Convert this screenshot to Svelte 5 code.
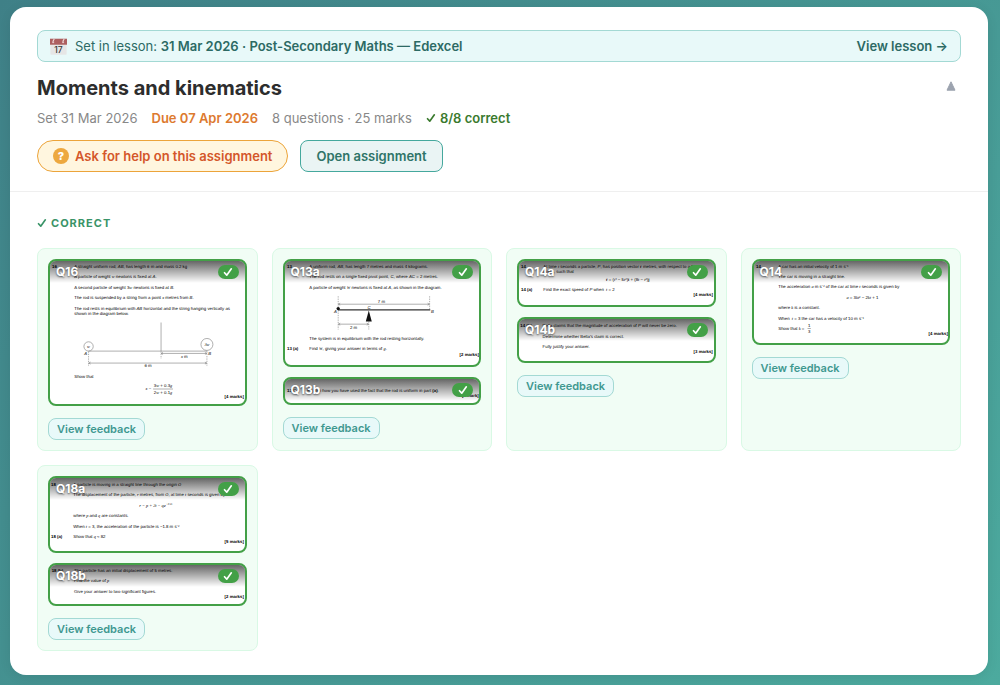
<script lang="ts">
	let open = $state(true);

	const lesson = { date: "31 Mar 2026", group: "Post-Secondary Maths — Edexcel" };
	const assignment = {
		title: "Moments and kinematics",
		set: "31 Mar 2026",
		due: "07 Apr 2026",
		questions: 8,
		marks: 25,
		correct: 8
	};
</script>

<svelte:head>
	<title>{assignment.title}</title>
</svelte:head>

{#snippet tick(cls)}
	<svg class={cls} viewBox="0 0 12 12" aria-hidden="true">
		<path d="M1.8 6.9 4.5 9.8 10 2.2" fill="none" stroke="currentColor" stroke-linecap="round" stroke-linejoin="round" />
	</svg>
{/snippet}

{#snippet thumb(label, height, scan)}
	<div class="thumb">
		<svg class="scan" viewBox="0 0 585 {height}">
			{@render scan()}
		</svg>
		<div class="overlay">
			<span class="label">{label}</span>
			<span class="badge">{@render tick("badge-tick")}</span>
		</div>
	</div>
{/snippet}

{#snippet q16()}
	<text class="b" x="6" y="21">16</text>
	<text x="73" y="21">A straight uniform rod, <tspan class="i">AB</tspan>, has length 6 m and mass 0.2 kg</text>
	<text x="73" y="52">A particle of weight <tspan class="m">w</tspan> newtons is fixed at <tspan class="i">A</tspan>.</text>
	<text x="73" y="84">A second particle of weight 3<tspan class="m">w</tspan> newtons is fixed at <tspan class="i">B</tspan>.</text>
	<text x="73" y="115">The rod is suspended by a string from a point <tspan class="m">x</tspan> metres from <tspan class="i">B</tspan>.</text>
	<text x="73" y="146">The rod rests in equilibrium with <tspan class="i">AB</tspan> horizontal and the string hanging vertically as</text>
	<text x="73" y="161">shown in the diagram below.</text>
	<path class="line" d="M334 185V271M116 271H473" />
	<circle class="line" cx="116" cy="257" r="14" />
	<circle class="line" cx="472" cy="251" r="18" />
	<text class="m" x="116" y="261" text-anchor="middle">w</text>
	<text class="m" x="472" y="255" text-anchor="middle">3w</text>
	<text class="i" x="103" y="284">A</text>
	<text class="i" x="476" y="284">B</text>
	<path class="line dash" d="M116 272V316M334 272V294M472 272V316" />
	<path class="line" d="M334 278H472M340 275 335 278 340 281M466 275 471 278 466 281M116 307H472M122 304 117 307 122 310M466 304 471 307 466 310" />
	<text x="404" y="291" text-anchor="middle"><tspan class="m">x</tspan> m</text>
	<text x="295" y="320" text-anchor="middle">6 m</text>
	<text x="73" y="351">Show that</text>
	<text class="m" x="287" y="389">x =</text>
	<text x="340" y="380" text-anchor="middle">3<tspan class="m">w</tspan> + 0.3<tspan class="m">g</tspan></text>
	<path class="line" d="M310 385H370" />
	<text x="340" y="399" text-anchor="middle">2<tspan class="m">w</tspan> + 0.1<tspan class="m">g</tspan></text>
	<text class="b" x="583" y="413" text-anchor="end">[4 marks]</text>
{/snippet}

{#snippet q13a()}
	<text class="b" x="6" y="21">13</text>
	<text x="73" y="21">A uniform rod, <tspan class="i">AB</tspan>, has length 7 metres and mass 4 kilograms.</text>
	<text x="73" y="52">The rod rests on a single fixed pivot point, <tspan class="i">C</tspan>, where <tspan class="i">AC</tspan> = 2 metres.</text>
	<text x="73" y="84">A particle of weight <tspan class="m">W</tspan> newtons is fixed at <tspan class="i">A</tspan>, as shown in the diagram.</text>
	<path class="line dash" d="M160 106V206M435 106V144M252 182V206" />
	<path class="line" d="M160 130H435M166 127 161 130 166 133M429 127 434 130 429 133M160 190H252M166 187 161 190 166 193M246 187 251 190 246 193" />
	<path d="M160 147H437" stroke="#333" stroke-width="4" />
	<circle cx="160" cy="143" r="5" fill="#111" />
	<path d="M252 149 261 182H243Z" fill="#111" />
	<text x="290" y="125" text-anchor="middle">7 m</text>
	<text class="i" x="248" y="143">C</text>
	<text class="i" x="147" y="155">A</text>
	<text class="i" x="439" y="155">B</text>
	<text x="206" y="206" text-anchor="middle">2 m</text>
	<text x="73" y="238">The system is in equilibrium with the rod resting horizontally.</text>
	<text class="b" x="6" y="269">13 (a)</text>
	<text x="73" y="269">Find <tspan class="m">W</tspan>, giving your answer in terms of <tspan class="m">g</tspan>.</text>
	<text class="b" x="583" y="285" text-anchor="end">[2 marks]</text>
{/snippet}

{#snippet q13b()}
	<text class="b" x="6" y="39">13 (b)</text>
	<text x="66" y="39">Explain how you have used the fact that the rod is uniform in part <tspan class="b">(a)</tspan>.</text>
	<text class="b" x="583" y="55" text-anchor="end">[1 mark]</text>
{/snippet}

{#snippet q14a()}
	<text class="b" x="6" y="21">14</text>
	<text x="73" y="21">At time <tspan class="m">t</tspan> seconds a particle, <tspan class="i">P</tspan>, has position vector <tspan class="b">r</tspan> metres, with respect to a fixed</text>
	<text x="73" y="36">origin, such that</text>
	<text x="327" y="59" text-anchor="middle"><tspan class="b">r</tspan> = (<tspan class="m">t</tspan>³ − 5<tspan class="m">t</tspan>²)<tspan class="b">i</tspan> + (8<tspan class="m">t</tspan> − <tspan class="m">t</tspan>²)<tspan class="b">j</tspan></text>
	<text class="b" x="6" y="90">14 (a)</text>
	<text x="73" y="90">Find the exact speed of <tspan class="i">P</tspan> when <tspan class="m" dx="3">t</tspan> = 2</text>
	<text class="b" x="583" y="105" text-anchor="end">[4 marks]</text>
{/snippet}

{#snippet q14b()}
	<text class="b" x="4" y="25">14 (b)</text>
	<text x="71" y="25">Bella claims that the magnitude of acceleration of <tspan class="i">P</tspan> will never be zero.</text>
	<text x="71" y="56">Determine whether Bella's claim is correct.</text>
	<text x="71" y="88">Fully justify your answer.</text>
	<text class="b" x="583" y="103" text-anchor="end">[3 marks]</text>
{/snippet}

{#snippet q14()}
	<text class="b" x="6" y="20">14</text>
	<text x="73" y="20">A car has an initial velocity of 1 m s⁻¹</text>
	<text x="73" y="51">The car is moving in a straight line.</text>
	<text x="73" y="82">The acceleration <tspan class="m">a</tspan> m s⁻² of the car at time <tspan class="m">t</tspan> seconds is given by</text>
	<text x="326" y="114" text-anchor="middle"><tspan class="m">a</tspan> = 3<tspan class="m">kt</tspan>² − 2<tspan class="m">kt</tspan> + 1</text>
	<text x="73" y="145">where <tspan class="m">k</tspan> is a constant.</text>
	<text x="73" y="176">When <tspan class="m" dx="3">t</tspan> = 3 the car has a velocity of 10 m s⁻¹</text>
	<text x="73" y="207">Show that <tspan class="m">k</tspan> =</text>
	<text x="166" y="199" text-anchor="middle">1</text>
	<path class="line" d="M161 203H171" />
	<text x="166" y="216" text-anchor="middle">3</text>
	<text class="b" x="583" y="223" text-anchor="end">[4 marks]</text>
{/snippet}

{#snippet q18a()}
	<text class="b" x="3" y="24">18</text>
	<text x="70" y="24">A particle is moving in a straight line through the origin <tspan class="m">O</tspan></text>
	<text x="70" y="55">The displacement of the particle, <tspan class="m">r</tspan> metres, from <tspan class="m">O</tspan>, at time <tspan class="m">t</tspan> seconds is given by</text>
	<text class="m" x="318" y="87" text-anchor="middle">r = p + 2t − qe<tspan class="sup" dy="-5">−0.2t</tspan></text>
	<text x="70" y="118">where <tspan class="m">p</tspan> and <tspan class="m">q</tspan> are constants.</text>
	<text x="70" y="150">When <tspan class="m">t</tspan> = 3, the acceleration of the particle is −1.8 m s⁻²</text>
	<text class="b" x="3" y="181">18 (a)</text>
	<text x="70" y="181">Show that <tspan class="m">q</tspan> ≈ 82</text>
	<text class="b" x="583" y="197" text-anchor="end">[5 marks]</text>
{/snippet}

{#snippet q18b()}
	<text class="b" x="5" y="21">18 (b)</text>
	<text x="72" y="21">The particle has an initial displacement of 5 metres.</text>
	<text x="72" y="52">Find the value of <tspan class="m">p</tspan></text>
	<text x="72" y="83">Give your answer to two significant figures.</text>
	<text class="b" x="583" y="99" text-anchor="end">[2 marks]</text>
{/snippet}

<main>
	<article>
		<header>
			<div class="lesson">
				<svg class="calendar" viewBox="0 0 48 48" aria-hidden="true">
					<rect x="1" y="3" width="46" height="44" rx="2" fill="#e6e6e6" />
					<path d="M0 2H48V19H0Z" fill="#ad5f60" />
					<path d="M8 10 12 3M36 10 40 3" stroke="#f0dede" stroke-width="3" />
					<circle cx="9" cy="12" r="3" fill="#e3c5c5" />
					<circle cx="37" cy="12" r="3" fill="#e3c5c5" />
					<text x="24" y="42" text-anchor="middle">17</text>
				</svg>
				<span>Set in lesson: <b>{lesson.date} · {lesson.group}</b></span>
				<a href="#lesson">View lesson →</a>
			</div>
			<div class="title">
				<h1>{assignment.title}</h1>
				<button class="toggle" aria-label="Toggle assignment" aria-expanded={open} onclick={() => (open = !open)}>
					<svg viewBox="0 0 10 10" class:closed={!open}>
						<path d="M5 .8 9 9.2H1Z" fill="#9ca3af" stroke="#9ca3af" stroke-linejoin="round" />
					</svg>
				</button>
			</div>
			<div class="meta">
				<span>Set {assignment.set}</span>
				<span class="due">Due {assignment.due}</span>
				<span>{assignment.questions} questions · {assignment.marks} marks</span>
				<span class="score">{@render tick("tick")}{assignment.correct}/{assignment.questions} correct</span>
			</div>
			<div class="actions">
				<button class="help"><span class="q">?</span>Ask for help on this assignment</button>
				<button class="open">Open assignment</button>
			</div>
		</header>

		{#if open}
			<section>
				<h2>{@render tick("tick")}Correct</h2>
				<div class="grid">
					<div class="card">
						{@render thumb("Q16", 431, q16)}
						<button class="feedback">View feedback</button>
					</div>
					<div class="card">
						{@render thumb("Q13a", 312, q13a)}
						{@render thumb("Q13b", 74, q13b)}
						<button class="feedback">View feedback</button>
					</div>
					<div class="card">
						{@render thumb("Q14a", 131, q14a)}
						{@render thumb("Q14b", 128, q14b)}
						<button class="feedback">View feedback</button>
					</div>
					<div class="card">
						{@render thumb("Q14", 246, q14)}
						<button class="feedback">View feedback</button>
					</div>
					<div class="card">
						{@render thumb("Q18a", 220, q18a)}
						{@render thumb("Q18b", 116, q18b)}
						<button class="feedback">View feedback</button>
					</div>
				</div>
			</section>
		{/if}
	</article>
</main>

<style>
	:global(body) {
		margin: 0;
		min-height: 100vh;
		background: linear-gradient(135deg, #3f8087, #4caa9e);
		font-family: Inter, "Liberation Sans", sans-serif;
	}

	main {
		padding: 7px 12px 10px 10px;
	}

	article {
		background: #fff;
		border-radius: 16px;
		box-shadow: 0 2px 12px rgba(0, 0, 0, 0.08);
	}

	header {
		padding: 23px 27px 19px;
		border-bottom: 1px solid #efefef;
	}

	button {
		font-family: inherit;
		cursor: pointer;
	}

	.lesson {
		display: flex;
		align-items: center;
		gap: 8px;
		height: 30px;
		padding: 0 12px;
		border: 1px solid #a3d9d4;
		border-radius: 8px;
		background: #e8f9f9;
		color: #2c6a64;
		font-size: 13px;
	}

	.lesson b,
	.lesson a {
		font-weight: 600;
	}

	.lesson a {
		margin-left: auto;
		color: inherit;
		text-decoration: none;
	}

	.calendar {
		width: 17px;
		height: 17px;
	}

	.calendar text {
		font-size: 24px;
		font-weight: 500;
		fill: #333;
	}

	.title {
		display: flex;
		align-items: flex-start;
		justify-content: space-between;
		margin-top: 12px;
	}

	h1 {
		margin: 0;
		color: #2d2d2d;
		font-size: 20px;
		font-weight: 700;
		line-height: 28px;
	}

	.toggle {
		display: flex;
		padding: 7px 5px;
		border: none;
		background: none;
	}

	.toggle svg {
		width: 10px;
		height: 10px;
	}

	.toggle .closed {
		transform: rotate(180deg);
	}

	.meta {
		display: flex;
		gap: 14px;
		margin-top: 7px;
		color: #888;
		font-size: 13px;
		line-height: 18px;
	}

	.due {
		color: #dd7a2f;
		font-weight: 600;
	}

	.score {
		display: flex;
		align-items: center;
		gap: 4px;
		color: #3a7a2e;
		font-weight: 600;
	}

	.tick {
		width: 10px;
		height: 10px;
		stroke-width: 2;
	}

	.actions {
		display: flex;
		gap: 12px;
		margin-top: 13px;
	}

	.help,
	.open {
		display: flex;
		align-items: center;
		gap: 6px;
		height: 32px;
		padding: 0 15px;
		font-size: 13px;
		font-weight: 600;
	}

	.help {
		border: 1px solid #eca43a;
		border-radius: 16px;
		background: #fff6df;
		color: #d4572a;
	}

	.open {
		border: 1px solid #45a89d;
		border-radius: 8px;
		background: #eaf4f4;
		color: #2f7468;
	}

	.q {
		display: flex;
		align-items: center;
		justify-content: center;
		width: 16px;
		height: 16px;
		border-radius: 50%;
		background: #eda83f;
		color: #fff;
		font-size: 11px;
		font-weight: 800;
	}

	section {
		padding: 24px 27px;
	}

	h2 {
		display: flex;
		align-items: center;
		gap: 4px;
		margin: 0 0 18px;
		color: #3a9468;
		font-size: 11px;
		font-weight: 700;
		line-height: 14px;
		letter-spacing: 1px;
		text-transform: uppercase;
	}

	.grid {
		display: grid;
		grid-template-columns: repeat(auto-fill, minmax(200px, 1fr));
		gap: 14px;
	}

	.card {
		padding: 10px;
		border: 1px solid #d9f9e5;
		border-radius: 8px;
		background: #f1fdf5;
	}

	.thumb {
		position: relative;
		margin-bottom: 10px;
		overflow: hidden;
		border: 2px solid #43a047;
		border-radius: 8px;
		background: #fff;
	}

	.scan {
		display: block;
		width: 100%;
		font-family: "Liberation Sans", Arial, sans-serif;
		font-size: 13px;
		text-rendering: geometricPrecision;
		fill: #000;
	}

	.b {
		font-weight: 700;
	}

	.i {
		font-style: italic;
	}

	.m {
		font-family: "Liberation Serif", serif;
		font-style: italic;
	}

	.sup {
		font-size: 9px;
	}

	.line {
		fill: none;
		stroke: #888;
		stroke-width: 2;
	}

	.dash {
		stroke-dasharray: 4 3;
	}

	.overlay {
		position: absolute;
		top: 0;
		left: 0;
		right: 0;
		display: flex;
		align-items: center;
		justify-content: space-between;
		padding: 4px 6px;
		background: linear-gradient(rgba(0, 0, 0, 0.6), transparent);
	}

	.label {
		color: #fff;
		font-size: 12px;
		font-weight: 700;
		line-height: 14px;
		text-shadow: 0 1px 2px rgba(0, 0, 0, 0.6);
	}

	.badge {
		display: flex;
		align-items: center;
		justify-content: center;
		width: 21px;
		height: 14px;
		border-radius: 10px;
		background: #43a047;
		color: #fff;
	}

	.badge-tick {
		width: 10px;
		height: 10px;
		stroke-width: 2;
	}

	.feedback {
		display: block;
		height: 22px;
		margin-top: 12px;
		padding: 0 8px;
		border: 1px solid #a3d9d4;
		border-radius: 8px;
		background: #e8f9f9;
		color: #3f9890;
		font-size: 11px;
		font-weight: 600;
	}
</style>
